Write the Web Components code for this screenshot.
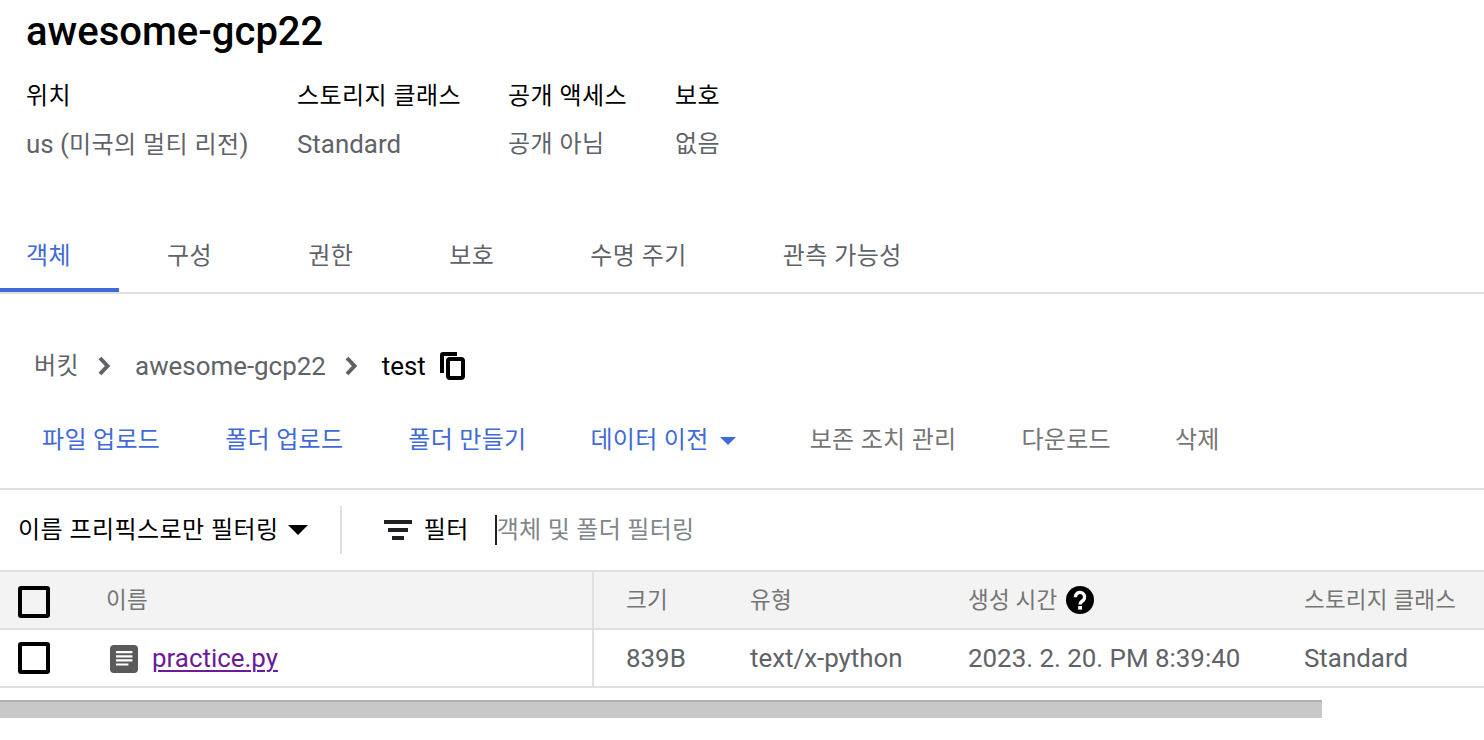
<!DOCTYPE html>
<html lang="ko">
<head>
<meta charset="utf-8">
<title>awesome-gcp22</title>
<style>
  html, body { margin: 0; height: 100%; overflow: hidden; background: #fff; }
  body { font: 24px/32px Roboto, "Noto Sans CJK KR", sans-serif; letter-spacing: .45px; color: #000; }
</style>
</head>
<body>
<bucket-header name="awesome-gcp22">
  <meta-item label="위치" value="us (미국의 멀티 리전)" width="271"></meta-item>
  <meta-item label="스토리지 클래스" value="Standard" width="211"></meta-item>
  <meta-item label="공개 액세스" value="공개 아님" width="167"></meta-item>
  <meta-item label="보호" value="없음"></meta-item>
</bucket-header>
<tab-bar>
  <tab-item active>객체</tab-item>
  <tab-item>구성</tab-item>
  <tab-item>권한</tab-item>
  <tab-item>보호</tab-item>
  <tab-item>수명 주기</tab-item>
  <tab-item>관측 가능성</tab-item>
</tab-bar>
<bread-crumb></bread-crumb>
<action-bar></action-bar>
<filter-bar></filter-bar>
<object-table></object-table>
<scroll-track></scroll-track>

<script>
// latin text runs a bit larger than the hangul in the reference
const LAT = '.lat { font-size: 25.9px; letter-spacing: 0; }';
const wrapLatin = s => s.replace(/[\x21-\x7e]+/g, m => `<span class="lat">${m}</span>`);

class MetaItem extends HTMLElement {
  connectedCallback() {
    const w = this.getAttribute('width');
    const root = this.shadowRoot || this.attachShadow({ mode: 'open' });
    root.innerHTML = `
      <style>
        :host { display: block; ${w ? `width: ${w}px;` : ''} }
        .l { color: #000; height: 48px; }
        .v { color: #5f6368; }
        ${LAT}
      </style>
      <div class="l">${this.getAttribute('label')}</div>
      <div class="v">${wrapLatin(this.getAttribute('value'))}</div>`;
  }
}
customElements.define('meta-item', MetaItem);

class BucketHeader extends HTMLElement {
  connectedCallback() {
    const root = this.attachShadow({ mode: 'open' });
    root.innerHTML = `
      <style>
        :host { display: block; padding: 10px 26px 0; height: 208px; box-sizing: border-box; }
        h1 { margin: 0 0 26px; font-size: 40px; line-height: 44px; font-weight: 500; letter-spacing: 0; }
        .meta { display: flex; }
      </style>
      <h1>${this.getAttribute('name')}</h1>
      <div class="meta"><slot></slot></div>`;
  }
}
customElements.define('bucket-header', BucketHeader);

class TabItem extends HTMLElement {
  connectedCallback() {
    const root = this.attachShadow({ mode: 'open' });
    root.innerHTML = `
      <style>
        :host { display: block; padding: 32px 48px 0; height: 84px; color: #5f6368; box-sizing: border-box; }
        :host([active]) { padding-left: 26px; color: #3f6ad8; border-bottom: 4px solid #3f6ad8; }
      </style>
      <slot></slot>`;
  }
}
customElements.define('tab-item', TabItem);

class TabBar extends HTMLElement {
  constructor() {
    super();
    this.attachShadow({ mode: 'open' }).innerHTML = `
      <style>
        :host { display: flex; height: 86px; box-sizing: border-box; border-bottom: 2px solid #e0e0e0; }
      </style>
      <slot></slot>`;
  }
}
customElements.define('tab-bar', TabBar);

class BreadCrumb extends HTMLElement {
  constructor() {
    super();
    const chevron = `<svg width="16" height="20" viewBox="0 0 16 20"><path d="M3 2 10.5 10 3 18" fill="none" stroke="#5f6368" stroke-width="4"/></svg>`;
    this.attachShadow({ mode: 'open' }).innerHTML = `
      <style>
        :host { display: flex; align-items: flex-start; height: 100px; padding: 56px 0 0 34px; box-sizing: border-box; color: #5f6368; }
        svg { flex: none; }
        .ch { display: flex; height: 32px; align-items: center; }
        .c1 { margin: 0 22px 0 18px; }
        .c2 { margin: 0 22px 0 18px; }
        .cur { color: #000; }
        .copy { margin: 2px 0 0 14px; }
        ${LAT}
      </style>
      <span>버킷</span>
      <span class="ch c1">${chevron}</span>
      <span class="lat">awesome-gcp22</span>
      <span class="ch c2">${chevron}</span>
      <span class="cur lat">test</span>
      <svg class="copy" width="25" height="28" viewBox="0 0 25 28">
        <path d="M2 21V3a1 1 0 0 1 1-1h14" fill="none" stroke="#000" stroke-width="4"/>
        <rect x="8" y="7" width="15" height="19" rx="2" fill="none" stroke="#000" stroke-width="4"/>
      </svg>`;
  }
}
customElements.define('bread-crumb', BreadCrumb);

class ActionBar extends HTMLElement {
  constructor() {
    super();
    const btn = (t, cls, ml) => `<span class="${cls}" style="margin-left:${ml}px">${t}</span>`;
    this.attachShadow({ mode: 'open' }).innerHTML = `
      <style>
        :host { display: flex; align-items: flex-start; height: 96px; padding-top: 30px; box-sizing: border-box; border-bottom: 2px solid #e0e0e0; letter-spacing: .3px; }
        .on { color: #3f6ad8; }
        .off { color: #757575; }
        .caret { width: 0; height: 0; margin: 13px 0 0 11px; border: 8px solid transparent; border-top: 8px solid #3f6ad8; border-bottom: 0; }
      </style>
      ${btn('파일 업로드', 'on', 42)}
      ${btn('폴더 업로드', 'on', 65)}
      ${btn('폴더 만들기', 'on', 65)}
      ${btn('데이터 이전', 'on', 64)}
      <i class="caret"></i>
      ${btn('보존 조치 관리', 'off', 74)}
      ${btn('다운로드', 'off', 65)}
      ${btn('삭제', 'off', 64)}`;
  }
}
customElements.define('action-bar', ActionBar);

class FilterBar extends HTMLElement {
  constructor() {
    super();
    this.attachShadow({ mode: 'open' }).innerHTML = `
      <style>
        :host { display: flex; align-items: center; height: 80px; padding-left: 18px; box-sizing: border-box; }
        .caret { width: 0; height: 0; margin: 0 32px 0 9px; border: 10px solid transparent; border-top: 10px solid #000; border-bottom: 0; }
        .div { width: 2px; height: 48px; background: #e0e0e0; margin-right: 42px; }
        svg { margin-right: 12px; }
        .lbl { margin-right: 26px; }
        .field { color: #80868b; border-left: 2px solid #202124; height: 30px; display: flex; align-items: center; letter-spacing: .3px; }
      </style>
      <span>이름 프리픽스로만 필터링</span>
      <i class="caret"></i>
      <i class="div"></i>
      <svg width="28" height="20" viewBox="0 0 28 20"><path d="M0 0h28v4H0zM4 8h20v4H4zM8 16h12v4H8z" fill="#202124"/></svg>
      <span class="lbl">필터</span>
      <span class="field">객체 및 폴더 필터링</span>`;
  }
}
customElements.define('filter-bar', FilterBar);

class TickBox extends HTMLElement {
  constructor() {
    super();
    this.attachShadow({ mode: 'open' }).innerHTML = `
      <style>
        :host { display: block; flex: none; width: 32px; height: 32px; box-sizing: border-box; border: 4px solid #000; border-radius: 3px; background: transparent; }
      </style>`;
  }
}
customElements.define('tick-box', TickBox);

class ObjectTable extends HTMLElement {
  constructor() {
    super();
    this.attachShadow({ mode: 'open' }).innerHTML = `
      <style>
        :host { display: block; color: #5f6368; }
        .row { display: grid; grid-template-columns: 592px 2px 156px 218px 336px 1fr; height: 58px; box-sizing: border-box; border-top: 2px solid #e0e0e0; align-items: center; }
        .head { background: #f3f3f3; color: #757575; font-size: 22.5px; letter-spacing: .2px; }
        .head tick-box { margin-top: 4px; }
        .row:last-child { height: 60px; border-bottom: 2px solid #e0e0e0; }
        .sel { display: flex; align-items: center; gap: 56px; padding-left: 18px; }
        .sep { align-self: stretch; background: #e0e0e0; }
        .pad { padding-left: 32px; }
        .t { display: flex; align-items: center; gap: 9px; }
        .name { display: flex; align-items: center; gap: 14px; margin-left: 4px; }
        .name svg { margin-top: 1px; }
        a { color: #6a1b9a; text-decoration: underline; text-decoration-thickness: 2px; text-underline-offset: 3px; }
        .clip { white-space: nowrap; }
        ${LAT}
      </style>
      <div class="row head">
        <div class="sel"><tick-box></tick-box><span>이름</span></div>
        <i class="sep"></i>
        <div class="pad">크기</div>
        <div>유형</div>
        <div class="t"><span>생성 시간</span>
          <svg width="28" height="28" viewBox="0 0 28 28"><circle cx="14" cy="14" r="14" fill="#000"/><path d="M9.4 11.2a4.6 4.6 0 1 1 7.7 3.2c-1.6 1.3-3 2-3 4.1" fill="none" stroke="#fff" stroke-width="3.4"/><rect x="12.2" y="20" width="3.8" height="3.6" fill="#fff"/></svg>
        </div>
        <div class="clip">스토리지 클래스</div>
      </div>
      <div class="row">
        <div class="sel"><tick-box></tick-box>
          <span class="name">
            <svg width="28" height="28" viewBox="0 0 28 28"><rect width="28" height="28" rx="4" fill="#5a5a5a"/><path d="M6 6h16.4v2.2H6zM6 10.2h16.4v2.2H6zM6 14.3h16.4v2.2H6zM6 18.4h12.4v2.2H6z" fill="#fff"/></svg>
            <a class="lat">practice.py</a>
          </span>
        </div>
        <i class="sep"></i>
        <div class="pad lat">839B</div>
        <div class="lat">text/x-python</div>
        <div class="lat">2023. 2. 20. PM 8:39:40</div>
        <div class="lat">Standard</div>
      </div>`;
  }
}
customElements.define('object-table', ObjectTable);

class ScrollTrack extends HTMLElement {
  constructor() {
    super();
    this.attachShadow({ mode: 'open' }).innerHTML = `
      <style>
        :host { display: block; margin-top: 12px; height: 18px; width: 1322px; box-sizing: border-box; background: #c8c8c8; border-top: 2px solid #b0b0b0; }
      </style>`;
  }
}
customElements.define('scroll-track', ScrollTrack);
</script>
</body>
</html>
